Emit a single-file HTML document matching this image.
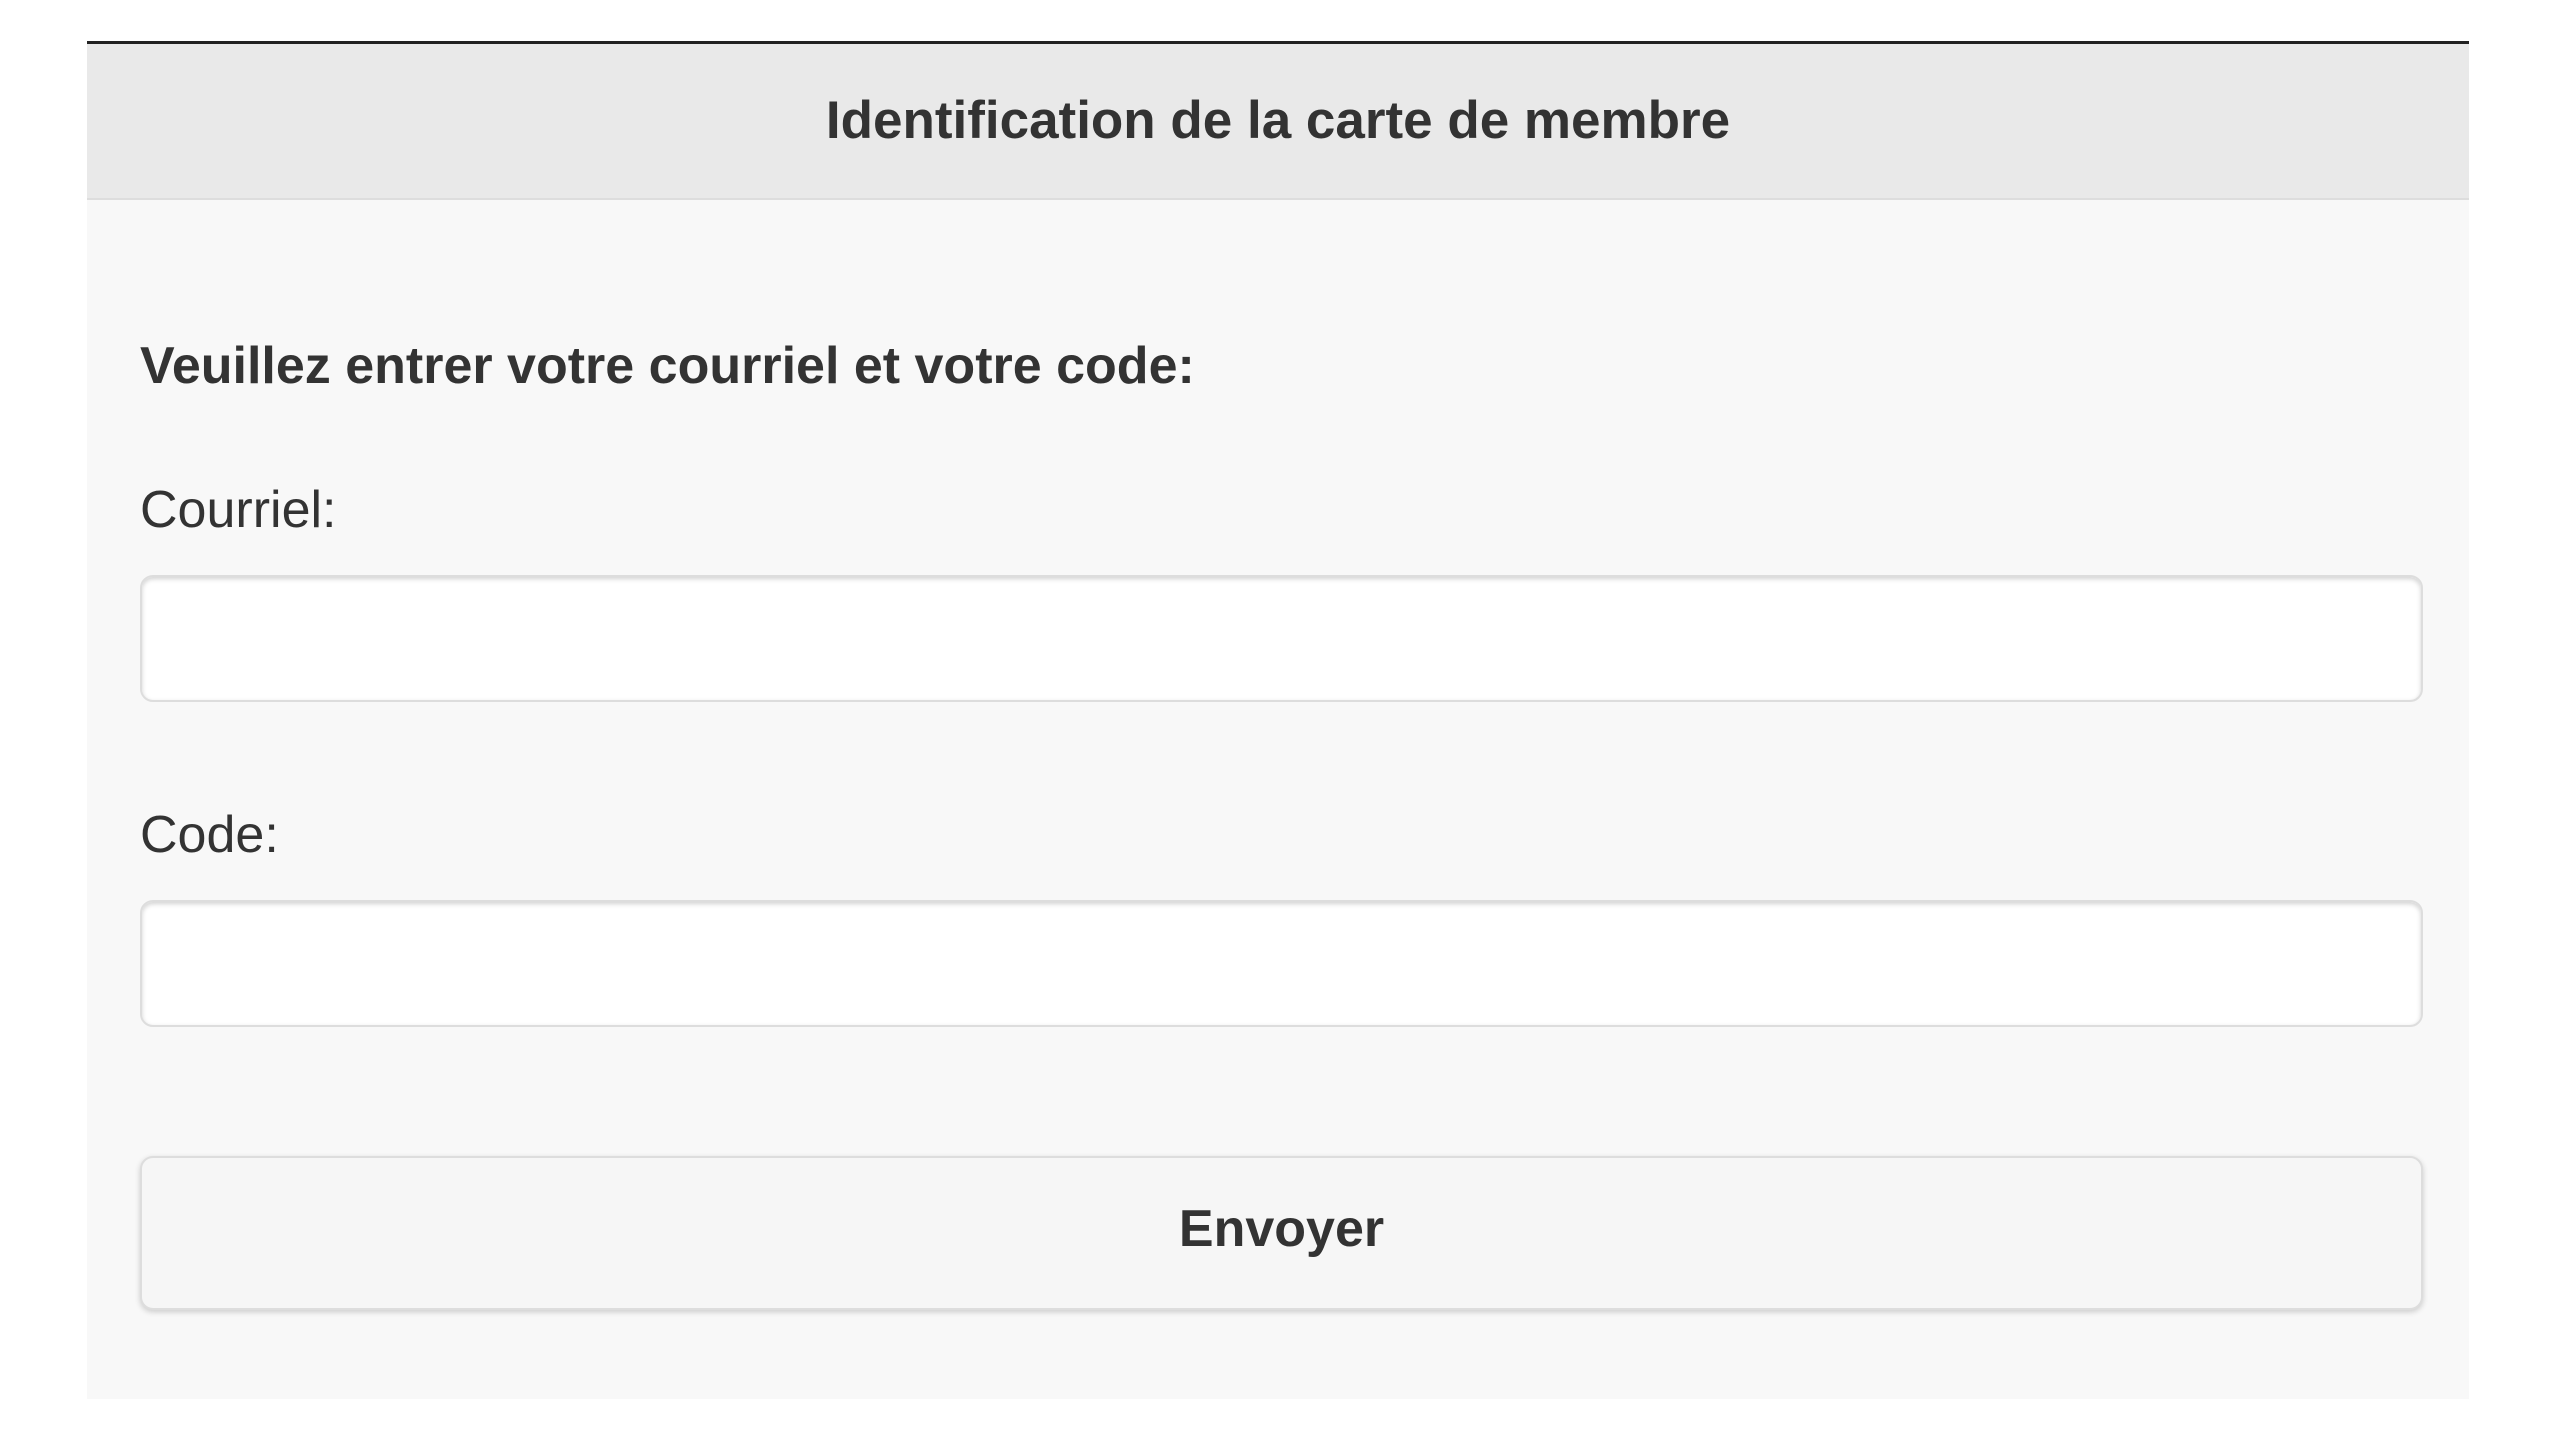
<!DOCTYPE html>
<html><head><meta charset="utf-8"><style>
html,body{margin:0;padding:0;background:#fff;width:2560px;height:1440px;overflow:hidden;font-family:"Liberation Sans",Arial,sans-serif;color:#333}
.wrap{position:absolute;left:87px;top:41px;width:2382px;height:1355px;background:#f8f8f8;border-top:3px solid #222}
.hdr{position:absolute;left:0;top:0;width:100%;height:154px;background:#e9e9e9;border-bottom:2px solid #ddd;text-align:center;line-height:154px;font-weight:bold;font-size:53px;color:#333}
.t{position:absolute;left:53px;font-size:52px;line-height:60px;white-space:nowrap}
.b{font-weight:bold}
.in{position:absolute;left:53px;width:2283px;height:127px;background:#fff;border:2px solid #ddd;border-radius:13px;box-shadow:inset 0 2px 5px rgba(0,0,0,.18);box-sizing:border-box}
.btn{position:absolute;left:53px;top:1112px;width:2283px;height:154px;background:#f6f6f6;border:2px solid #ddd;border-radius:13px;box-shadow:0 2px 6px rgba(0,0,0,.18);box-sizing:border-box;text-align:center;line-height:142px;font-size:52px;font-weight:bold;color:#333}
</style></head><body>
<div class="wrap">
<div class="hdr">Identification de la carte de membre</div>
<div class="t b" style="top:292px">Veuillez entrer votre courriel et votre code:</div>
<div class="t" style="top:436px">Courriel:</div>
<div class="in" style="top:531px"></div>
<div class="t" style="top:761px">Code:</div>
<div class="in" style="top:856px"></div>
<div class="btn">Envoyer</div>
</div>
</body></html>
